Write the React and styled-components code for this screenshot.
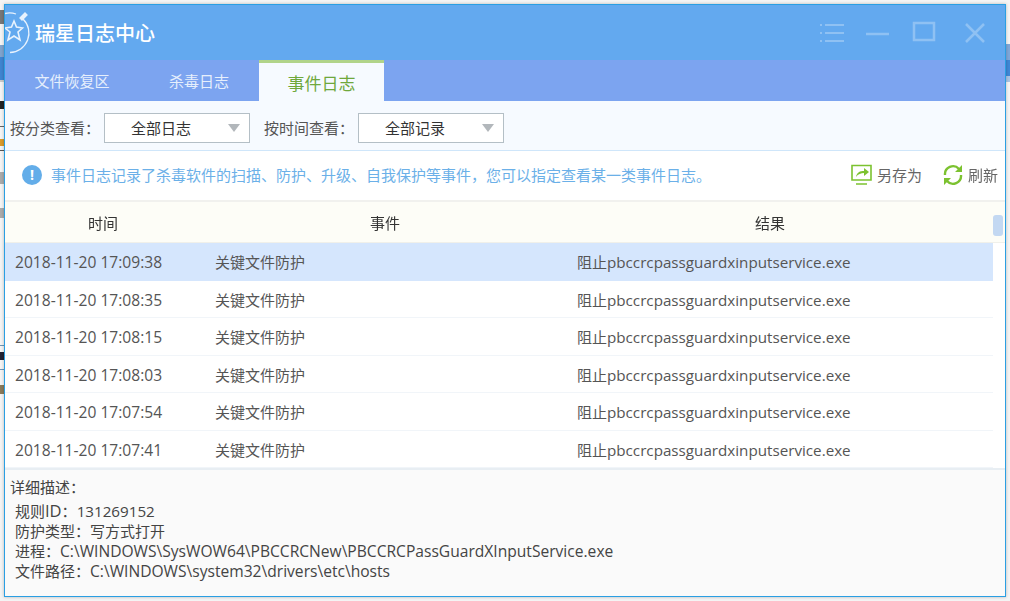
import React from 'react';
import styled, { createGlobalStyle } from 'styled-components';

const GlobalStyle = createGlobalStyle`
  html, body {
    margin: 0;
    padding: 0;
    width: 1010px;
    height: 601px;
    overflow: hidden;
    background: #f4f4f4;
    font-family: "Open Sans", "Noto Sans CJK SC", sans-serif;
    font-size: 15px;
    color: #444;
  }
  * { box-sizing: border-box; }
`;

const Desktop = styled.div`
  position: relative;
  width: 1010px;
  height: 601px;
  padding: 4px;
`;

/* bits of the window behind, showing at the screenshot's edges */
const BackStrip = styled.div`
  position: absolute;
  top: ${(props) => props.$top}px;
  left: ${(props) => (props.$side === 'left' ? 0 : 1006)}px;
  width: 4px;
  height: ${(props) => props.$height}px;
  background: ${(props) => props.$color};
`;

const Window = styled.div`
  position: relative;
  width: 1002px;
  height: 593px;
  border: 1px solid #2a9fe3;
  background: #fff;
  display: flex;
  flex-direction: column;
  overflow: hidden;
  box-shadow: 0 0 3px rgba(0, 0, 0, 0.25);
  filter: blur(0.35px);
`;

const TitleBar = styled.div`
  height: 55px;
  flex: none;
  background: #63a9ef;
  display: flex;
  align-items: center;
  padding-right: 19px;
`;

const Logo = styled.svg`
  width: 30px;
  height: 44px;
  flex: none;
  overflow: hidden;
`;

const Title = styled.div`
  font-size: 20px;
  font-weight: 500;
  color: #fff;
  flex: 1;
`;

const WinButtons = styled.div`
  display: flex;
  align-items: center;
  gap: 20px;
`;

const WinIcon = styled.svg`
  width: ${(props) => props.$w}px;
  height: 24px;
  display: block;
  margin-right: ${(props) => props.$mr || 0}px;
`;

const TabBar = styled.div`
  height: 41px;
  flex: none;
  background: #7ca4f0;
  display: flex;
`;

const Tab = styled.div`
  width: ${(props) => props.$w}px;
  display: flex;
  align-items: center;
  justify-content: center;
  font-size: ${(props) => (props.$active ? 17 : 15)}px;
  color: ${(props) => (props.$active ? '#6fa83c' : '#e6effc')};
  background: ${(props) => (props.$active ? '#f6faff' : 'transparent')};
  border-top: ${(props) => (props.$active ? '3px solid #b1d48a' : 'none')};
`;

const FilterBar = styled.div`
  height: 50px;
  flex: none;
  background: #f6faff;
  border-bottom: 1px solid #cfe6fa;
  display: flex;
  align-items: center;
  padding: 4px 0 0 5px;
`;

const FilterLabel = styled.span`
  color: #555;
  width: 94px;
`;

const Select = styled.div`
  position: relative;
  width: 146px;
  height: 30px;
  border: 1px solid #b4bfc6;
  background: #fff;
  color: #333;
  line-height: 28px;
  padding-left: 26px;
  margin-right: 14px;

  &::after {
    content: '';
    position: absolute;
    right: 9px;
    top: 10px;
    border-left: 6px solid transparent;
    border-right: 6px solid transparent;
    border-top: 8px solid #b2b7bb;
  }
`;

const InfoBar = styled.div`
  height: 51px;
  flex: none;
  background: #fff;
  border-bottom: 2px solid #f1f1ee;
  display: flex;
  align-items: center;
  padding: 0 7px 2px 17px;
`;

const InfoDot = styled.div`
  width: 20px;
  height: 20px;
  border-radius: 50%;
  background: #63ade9;
  color: #fff;
  font-size: 14px;
  font-weight: 700;
  line-height: 20px;
  text-align: center;
  flex: none;
`;

const InfoText = styled.div`
  margin-left: 9px;
  color: #6bb0e8;
  flex: 1;
  white-space: nowrap;
`;

const ToolAction = styled.div`
  display: flex;
  align-items: center;
  gap: 4px;
  margin-left: ${(props) => props.$gap || 0}px;
  color: #666;
`;

const ActionIcon = styled.svg`
  width: 22px;
  height: 22px;
  display: block;
`;

const TableHead = styled.div`
  height: 41px;
  flex: none;
  background: #fdfdf7;
  border-bottom: 1px solid #f0f0ea;
  display: grid;
  grid-template-columns: 196px 368px 402px;
  align-items: center;
  text-align: center;
  color: #333;
`;

const ScrollThumb = styled.div`
  position: absolute;
  right: 2px;
  top: 210px;
  width: 10px;
  height: 21px;
  border-radius: 3px;
  background: #c3d8f2;
`;

const Rows = styled.div`
  height: 225px;
  flex: none;
  overflow: hidden;
  padding-right: 12px;
`;

const Row = styled.div`
  height: 37.5px;
  display: grid;
  grid-template-columns: 200px 362px 1fr;
  align-items: baseline;
  padding: 8px 0 0 10px;
  color: #555;
  background: ${(props) => (props.$selected ? '#d5e6fd' : '#fff')};
  border-bottom: ${(props) => (props.$selected ? 'none' : '1px solid #f1f5f9')};
`;

const Latin = styled.span`
  font-size: ${(props) => props.$size}px;
`;

const Details = styled.div`
  flex: 1;
  background: #fafafa;
  border-top: 2px solid #e8eef3;
  padding: 7px 0 0 5px;
  color: #444;
`;

const DetailsHead = styled.div`
  height: 24px;
  line-height: 20px;
`;

const DetailLines = styled.div`
  padding-left: 5px;
  line-height: 20px;
`;

const rows = [
  '2018-11-20 17:09:38',
  '2018-11-20 17:08:35',
  '2018-11-20 17:08:15',
  '2018-11-20 17:08:03',
  '2018-11-20 17:07:54',
  '2018-11-20 17:07:41',
];

const backStrips = [
  { side: 'left', top: 10, height: 14, color: '#777' },
  { side: 'left', top: 45, height: 12, color: '#7fa3cc' },
  { side: 'left', top: 57, height: 23, color: '#3f84d0' },
  { side: 'left', top: 80, height: 2, color: '#c9c9c9' },
  { side: 'left', top: 101, height: 8, color: '#222' },
  { side: 'left', top: 126, height: 1, color: '#666' },
  { side: 'left', top: 139, height: 7, color: '#d99a2b' },
  { side: 'left', top: 150, height: 1, color: '#555' },
  { side: 'left', top: 172, height: 12, color: '#aaa' },
  { side: 'left', top: 208, height: 10, color: '#aaa' },
  { side: 'left', top: 345, height: 1, color: '#6d96b8' },
  { side: 'left', top: 352, height: 8, color: '#223' },
  { side: 'left', top: 369, height: 1, color: '#6d96b8' },
  { side: 'left', top: 385, height: 9, color: '#8a7a5a' },
  { side: 'right', top: 44, height: 16, color: '#7fa7d8' },
  { side: 'right', top: 60, height: 16, color: '#3f87d6' },
  { side: 'right', top: 76, height: 6, color: '#a9c4e4' },
];

function App() {
  return (
    <Desktop>
      <GlobalStyle />
      {backStrips.map((s) => (
        <BackStrip key={s.side + s.top} $side={s.side} $top={s.top} $height={s.height} $color={s.color} />
      ))}
      <Window>
        <TitleBar>
          <Logo viewBox="0 0 30 44" fill="none" stroke="#e8f2fd" strokeWidth="1.3">
            <path d="M18 8 A19.5 19.5 0 0 1 5 41.5" />
            <path d="M0 2.5 A19.5 19.5 0 0 1 11 3" />
            <path d="M9 10 L11.5 16 L17.5 17 L13 21 L15 29 L9 25 L3 29 L5 21 L0 17 L6.5 16 Z" strokeWidth="1.6" />
            <path d="M15 7 L20 2 L22 4 L17 9 Z" fill="#e8f2fd" />
          </Logo>
          <Title>瑞星日志中心</Title>
          <WinButtons>
            <WinIcon $w={24} $mr={2} viewBox="0 0 24 24" stroke="#8fc1f3" strokeWidth="2" fill="none">
              <path d="M5 4 H24 M5 12 H24 M5 20 H24 M0 4 H2 M0 12 H2 M0 20 H2" />
            </WinIcon>
            <WinIcon $w={24} $mr={2} viewBox="0 0 24 24" stroke="#8fc1f3" strokeWidth="2.5" fill="none">
              <path d="M0 13 H23" />
            </WinIcon>
            <WinIcon $w={24} $mr={8} viewBox="0 0 24 24" stroke="#8fc1f3" strokeWidth="2.5" fill="none">
              <rect x="2" y="2" width="20" height="17" />
            </WinIcon>
            <WinIcon $w={22} viewBox="0 0 22 24" stroke="#8fc1f3" strokeWidth="2.5" fill="none">
              <path d="M2 3 L20 21 M20 3 L2 21" />
            </WinIcon>
          </WinButtons>
        </TitleBar>
        <TabBar>
          <Tab $w={134}>文件恢复区</Tab>
          <Tab $w={120}>杀毒日志</Tab>
          <Tab $w={125} $active>事件日志</Tab>
        </TabBar>
        <FilterBar>
          <FilterLabel>按分类查看：</FilterLabel>
          <Select>全部日志</Select>
          <FilterLabel>按时间查看：</FilterLabel>
          <Select>全部记录</Select>
        </FilterBar>
        <InfoBar>
          <InfoDot>!</InfoDot>
          <InfoText>事件日志记录了杀毒软件的扫描、防护、升级、自我保护等事件，您可以指定查看某一类事件日志。</InfoText>
          <ToolAction>
            <ActionIcon viewBox="0 0 22 22" fill="none" stroke="#7cc230" strokeWidth="1.6">
              <path d="M1 1.5 H20 V16 H1 Z M5 20 H16" />
              <path d="M5 13 C6 8 9 7 13 7 V4 L18 8 L13 12 V9 C10 9 7 10 5 13 Z" fill="#7cc230" stroke="none" />
            </ActionIcon>
            另存为
          </ToolAction>
          <ToolAction $gap={20}>
            <ActionIcon viewBox="0 0 22 22" fill="none" stroke="#7cc230" strokeWidth="2.4">
              <path d="M3 11 A8 8 0 0 1 17 5" />
              <path d="M19 11 A8 8 0 0 1 5 17" />
              <path d="M20 1 V8 H13 Z M2 21 V14 H9 Z" fill="#7cc230" stroke="none" />
            </ActionIcon>
            刷新
          </ToolAction>
        </InfoBar>
        <TableHead>
          <span>时间</span>
          <span>事件</span>
          <span>结果</span>
        </TableHead>
        <Rows>
          {rows.map((time, i) => (
            <Row key={time} $selected={i === 0}>
              <Latin $size={15.6}>{time}</Latin>
              <span>关键文件防护</span>
              <span>阻止<Latin $size={15.2}>pbccrcpassguardxinputservice.exe</Latin></span>
            </Row>
          ))}
        </Rows>
        <ScrollThumb />
        <Details>
          <DetailsHead>详细描述：</DetailsHead>
          <DetailLines>
            <div>规则<Latin $size={16.5}>ID</Latin>：<Latin $size={15.2}>131269152</Latin></div>
            <div>防护类型：写方式打开</div>
            <div>进程：<Latin $size={15.6}>C:\WINDOWS\SysWOW64\PBCCRCNew\PBCCRCPassGuardXInputService.exe</Latin></div>
            <div>文件路径：<Latin $size={15.6}>C:\WINDOWS\system32\drivers\etc\hosts</Latin></div>
          </DetailLines>
        </Details>
      </Window>
    </Desktop>
  );
}

export default App;
